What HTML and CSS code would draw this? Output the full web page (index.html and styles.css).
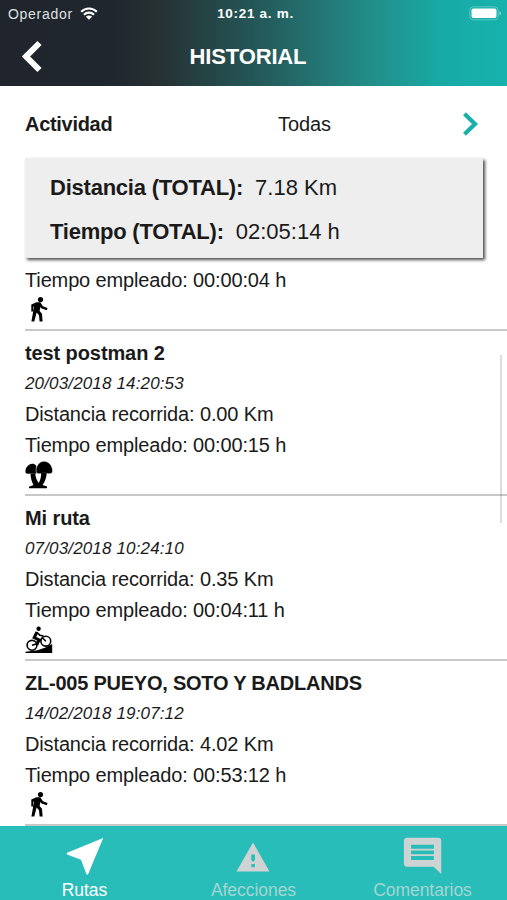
FILE: index.html
```
<!DOCTYPE html>
<html lang="es">
<head>
    <meta charset="UTF-8">
    <meta name="viewport" content="width=device-width, initial-scale=1.0">
    <title>Historial</title>
    <link rel="stylesheet" href="styles.css">
</head>
<body>
    <svg class="symbols" width="0" height="0">
        <symbol id="walk" viewBox="0 0 28 28">
            <circle cx="15.500" cy="3.600" r="2.600"/>
            <path d="M11.500 6.300h3.800l2.600 3.900 4.700 1.700-.8 2.400-5.200-1.700-1.200-1.600-.8 3.900 2.400 2.800.6 7.800h-3l-.6-6.300-2.400-2.600-2.300 8.900H6.400l2.700-15-.8.600-.1 4.300H6.300V8.600z"/>
        </symbol>
    </svg>

    <div class="app">
        <header class="header">
            <div class="status-bar">
                <div class="carrier">
                    <span>Operador</span>
                    <svg width="18" height="13" viewBox="0 0 18 13">
                        <path d="M1.200 4.800a11 11 0 0 1 15.600 0M4 7.700a7 7 0 0 1 10 0" fill="none" stroke="#fff" stroke-width="2.100"/>
                        <path d="M5.900 9.700a4.400 4.400 0 0 1 6.200 0L9 12.800z" fill="#fff"/>
                    </svg>
                </div>
                <span class="clock">10:21 a. m.</span>
                <svg class="battery" width="33" height="15" viewBox="0 0 33 15">
                    <rect x=".8" y=".8" width="28.400" height="13" rx="3.500" fill="none" stroke="#5cc8c3" stroke-width="1"/>
                    <rect x="2.500" y="2.600" width="25" height="9.400" rx="2" fill="#fff"/>
                    <path d="M30.500 5v4.600q1.400-.8 1.400-2.300t-1.400-2.300z" fill="#8fdad6"/>
                </svg>
            </div>
            <div class="nav">
                <svg class="back" width="22" height="34" viewBox="0 0 22 34">
                    <path d="M18.500 3L5 16.500 18.500 30" fill="none" stroke="#fff" stroke-width="6"/>
                </svg>
                <h1>HISTORIAL</h1>
            </div>
        </header>

        <main class="content">
            <div class="filter">
                <span class="filter-label">Actividad</span>
                <span class="filter-value">Todas</span>
                <svg width="18" height="26" viewBox="0 0 18 26">
                    <path d="M3.500 1.800L14 12 3.500 22.200" fill="none" stroke="#18b0aa" stroke-width="4.200"/>
                </svg>
            </div>

            <div class="totals">
                <p><b>Distancia (TOTAL):</b><span>7.18 Km</span></p>
                <p><b>Tiempo (TOTAL):</b><span>02:05:14 h</span></p>
            </div>

            <div class="list">
                <div class="route route-first">
                    <p>Tiempo empleado: 00:00:04 h</p>
                    <svg class="activity"><use href="#walk"/></svg>
                </div>
                <div class="route">
                    <h2>test postman 2</h2>
                    <p class="date">20/03/2018 14:20:53</p>
                    <p>Distancia recorrida: 0.00 Km</p>
                    <p>Tiempo empleado: 00:00:15 h</p>
                    <svg class="activity" viewBox="0 0 28 28">
                        <path d="M7.200 2.700C3.400 2.700.6 6.500.4 10.300c-.1 2.200 1.500 2.800 3.800 2.400 2.600-.5 4.800-.5 7.200 0V5C10.300 3.300 9 2.700 7.200 2.700z"/>
                        <path d="M19 .2c-4.600 0-7.700 4.500-8 9.100-.1 2.900 1.700 3.900 4.300 3.400 2.900-.6 5.100-.6 8 0 2.700.5 4.500-.6 4.300-3.400C27.300 4.700 23.800.2 19 .2z" stroke="#fff" stroke-width=".5"/>
                        <path d="M5.500 12.300h4.800c.1 3.800 1.300 7 3.400 9.600 1.700-3 2.500-6 2.500-9.900h5.500c-.2 4.800-1.800 8.800-4.200 11.900l4.500 1.600v1.700H4v-1.500l4.500-1.600C6.800 21 5.500 16.800 5.500 12.300z"/>
                    </svg>
                </div>
                <div class="route">
                    <h2>Mi ruta</h2>
                    <p class="date">07/03/2018 10:24:10</p>
                    <p>Distancia recorrida: 0.35 Km</p>
                    <p>Tiempo empleado: 00:04:11 h</p>
                    <svg class="activity" viewBox="0 0 28 28">
                        <circle cx="13.600" cy="2.800" r="2.200"/>
                        <path d="M.5 25.800l12-1.600 8-2.700 6.700-3.500V27H.5z"/>
                        <circle cx="7" cy="19.300" r="4.900" fill="#fff" stroke="#000" stroke-width="1.600"/>
                        <circle cx="20.800" cy="15.200" r="4.900" fill="#fff" stroke="#000" stroke-width="1.600"/>
                        <path d="M12 6L9.200 11.500l4.500 2.200L11.800 19" fill="none" stroke="#000" stroke-width="3"/>
                        <path d="M12 6.500l2.800 2.700 3.700.8M7 19.300l5-1.500 5.500-6 3.300 3.400" fill="none" stroke="#000" stroke-width="1.600"/>
                    </svg>
                </div>
                <div class="route">
                    <h2 class="long-name">ZL-005 PUEYO, SOTO Y BADLANDS</h2>
                    <p class="date">14/02/2018 19:07:12</p>
                    <p>Distancia recorrida: 4.02 Km</p>
                    <p>Tiempo empleado: 00:53:12 h</p>
                    <svg class="activity"><use href="#walk"/></svg>
                </div>
                <div class="scrollbar"></div>
            </div>
        </main>

        <nav class="tabs">
            <div class="tab active">
                <svg width="40" height="40" viewBox="0 0 40 40">
                    <path d="M38.200 2.100L2.200 16.700q-1.200.8 0 1.800L16 23.700l5.400 14.400q1 1.200 1.800 0z"/>
                </svg>
                <span>Rutas</span>
            </div>
            <div class="tab">
                <svg width="40" height="40" viewBox="0 0 40 40">
                    <path fill-rule="evenodd" d="M19 6.500L35.500 35.500H2.500zM17.300 18.500v5.200l1 1.800h1.600l1-1.800v-5.200zM17.400 28v3.200h3.400V28z"/>
                </svg>
                <span>Afecciones</span>
            </div>
            <div class="tab">
                <svg width="40" height="40" viewBox="0 0 40 40">
                    <path fill-rule="evenodd" d="M4.300 1.800h30.600q3.300 0 3.300 3.300V38.100l-7.600-7.300H4.300q-3.400 0-3.400-3.300V5.100q0-3.300 3.400-3.300zM8.100 8.700v4h22.800v-4zM8.100 14.500v3.800h22.800v-3.800zM8.100 20.100v3.800h22.800v-3.800z"/>
                </svg>
                <span>Comentarios</span>
            </div>
        </nav>
    </div>
</body>
</html>
```
FILE: styles.css
```
body {
    font-family: "Liberation Sans", Arial, sans-serif;
    margin: 0;
    color: #1a1a1a;
    background: #fff;
}
h1, h2, p {
    margin: 0;
}
.symbols {
    position: absolute;
}
.app {
    display: flex;
    flex-direction: column;
    height: 900px;
    overflow: hidden;
}
.header {
    height: 86px;
    flex-shrink: 0;
    color: #fff;
    background: linear-gradient(to right, #20252d 0%, #20262d 22%, #263234 32%, #245657 50%, #228f8b 74%, #18aaa5 87%, #17b2ad 100%);
}
.status-bar {
    display: grid;
    grid-template-columns: 1fr auto 1fr;
    align-items: center;
    height: 27px;
    padding: 0 5px 0 8px;
    font-size: 14px;
}
.carrier {
    display: flex;
    align-items: center;
    gap: 7px;
    color: #dfe1e2;
    letter-spacing: 0.7px;
}
.clock {
    padding-left: 1px;
    font-weight: bold;
    font-size: 13.5px;
    letter-spacing: 0.7px;
}
.battery {
    justify-self: end;
}
.nav {
    display: grid;
    grid-template-columns: 60px 1fr 71px;
    align-items: center;
    height: 59px;
}
.back {
    margin-left: 21px;
}
.nav h1 {
    font-size: 22px;
    letter-spacing: -0.15px;
    text-align: center;
}
.content {
    flex: 1;
    min-height: 0;
    overflow: hidden;
}
.filter {
    display: grid;
    grid-template-columns: 253px 1fr 18px;
    align-items: center;
    box-sizing: border-box;
    height: 72px;
    padding: 5px 28px 0 25px;
    font-size: 20px;
}
.filter-label {
    font-weight: bold;
    letter-spacing: -0.3px;
}
.filter-value {
    letter-spacing: -0.1px;
}
.totals {
    box-sizing: border-box;
    width: 458px;
    height: 100px;
    margin-left: 25px;
    padding: 8px 25px;
    font-size: 22px;
    line-height: 44px;
    background: #eee;
    box-shadow: 2px 2px 3px rgba(0, 0, 0, 0.7);
}
.totals b {
    letter-spacing: -0.23px;
}
.totals span {
    margin-left: 12px;
}
.list {
    position: relative;
    padding-left: 25px;
    font-size: 20px;
    line-height: 30.7px;
    letter-spacing: -0.14px;
}
.route {
    box-sizing: border-box;
    height: 165px;
    padding-top: 7px;
    border-bottom: 2px solid #c8c8c8;
}
.route-first {
    height: 73px;
}
.route h2 {
    font-size: 20px;
    letter-spacing: -0.1px;
}
.route .long-name {
    letter-spacing: -0.23px;
}
.route .date {
    font-size: 17px;
    font-style: italic;
    letter-spacing: 0.15px;
}
.activity {
    display: block;
    width: 28px;
    height: 28px;
}
.scrollbar {
    position: absolute;
    top: 97px;
    right: 5px;
    width: 2px;
    height: 168px;
    background: rgba(0, 0, 0, 0.13);
}
.tabs {
    display: grid;
    grid-template-columns: repeat(3, 1fr);
    height: 74px;
    flex-shrink: 0;
    color: #fff;
    background: #29bdb9;
}
.tab {
    display: flex;
    flex-direction: column;
    align-items: center;
    padding-top: 10px;
    font-size: 17.5px;
    line-height: 28px;
    letter-spacing: -0.05px;
    color: #a3d5d2;
    fill: #d0d3d3;
}
.tab.active {
    color: #fff;
    fill: #fff;
}
```
